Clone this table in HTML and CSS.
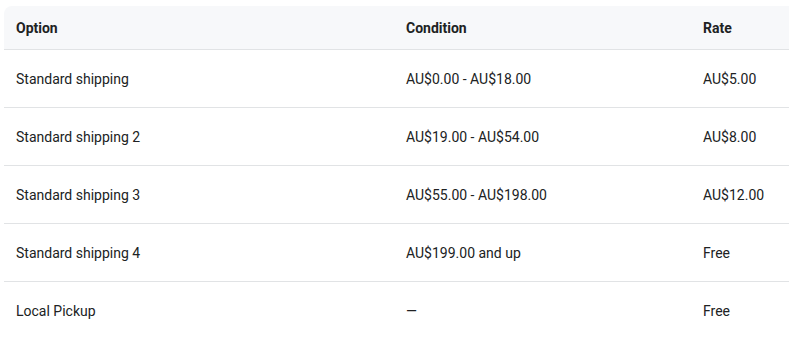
FILE: index.html
```html
<!DOCTYPE html>
<html lang="en">
<head>
<meta charset="utf-8">
<title>Shipping rates</title>
<link rel="stylesheet" href="styles.css">
</head>
<body>
<table class="rates">
  <colgroup>
    <col class="c-option">
    <col class="c-cond">
    <col class="c-rate">
  </colgroup>
  <thead>
    <tr><th>Option</th><th>Condition</th><th>Rate</th></tr>
  </thead>
  <tbody>
    <tr><td>Standard shipping</td><td>AU$0.00 - AU$18.00</td><td>AU$5.00</td></tr>
    <tr><td>Standard shipping 2</td><td>AU$19.00 - AU$54.00</td><td>AU$8.00</td></tr>
    <tr><td>Standard shipping 3</td><td>AU$55.00 - AU$198.00</td><td>AU$12.00</td></tr>
    <tr><td>Standard shipping 4</td><td>AU$199.00 and up</td><td>Free</td></tr>
    <tr><td>Local Pickup</td><td>—</td><td>Free</td></tr>
  </tbody>
</table>
</body>
</html>
```
FILE: styles.css
```css
html, body {
  margin: 0;
  background: #ffffff;
  overflow: hidden;
}
body {
  padding: 6px 0 0 4px;
  font-family: Roboto, "Liberation Sans", sans-serif;
  font-size: 14px;
  color: #202223;
}
.rates {
  width: 800px;
  border-collapse: separate;
  border-spacing: 0;
  table-layout: fixed;
}
.c-option { width: 390px; }
.c-cond { width: 297px; }
.rates th {
  background: #f7f8fa;
  text-align: left;
  font-weight: 700;
  height: 44px;
  padding: 0 12px;
  box-sizing: border-box;
  border-bottom: 1px solid #e1e3e5;
  vertical-align: middle;
}
.rates th:first-child { border-top-left-radius: 8px; }
.rates td {
  height: 58px;
  padding: 0 12px;
  box-sizing: border-box;
  vertical-align: middle;
  border-bottom: 1px solid #e1e3e5;
}
.rates tbody tr:last-child td { border-bottom: none; }
```
